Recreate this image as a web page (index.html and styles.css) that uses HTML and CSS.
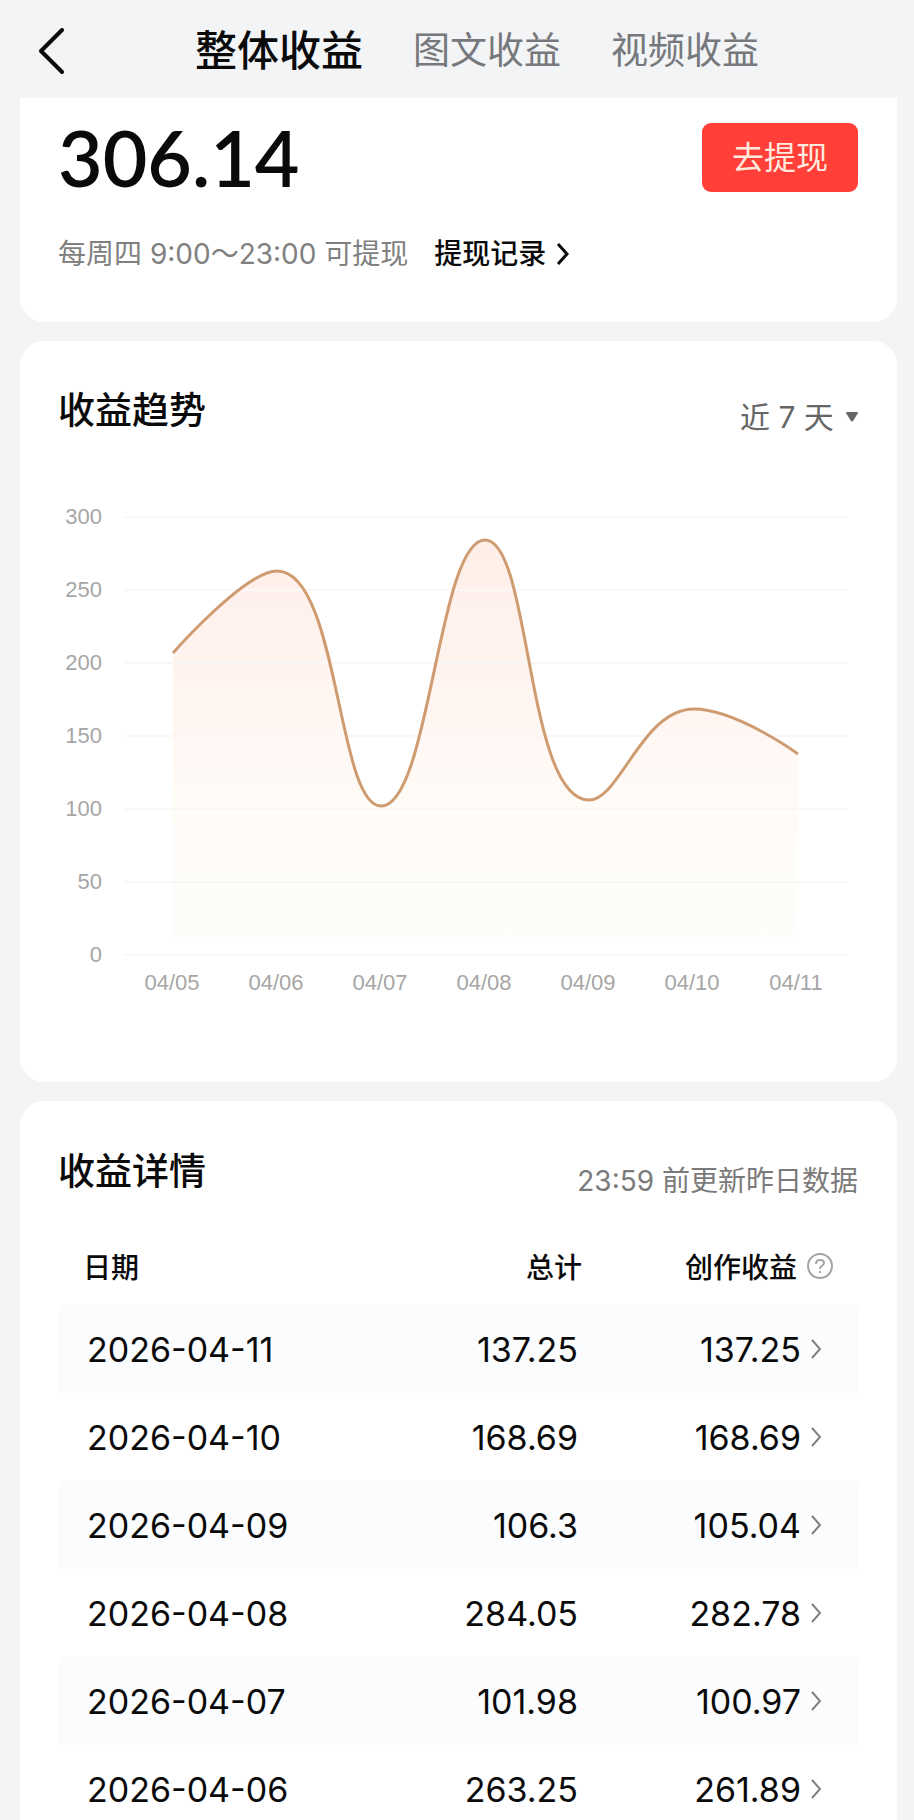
FILE: index.html
```html
<!DOCTYPE html>
<html lang="zh-CN">
<head>
    <meta charset="UTF-8">
    <meta name="viewport" content="width=device-width, initial-scale=1.0">
    <title>整体收益</title>
    <link rel="stylesheet" href="styles.css">
</head>
<body>

<header class="top-bar">
    <button class="back-button" aria-label="返回">
        <svg width="26" height="46" viewBox="0 0 26 46" fill="none" stroke="#0a0a0a" stroke-width="4" stroke-linecap="round" stroke-linejoin="round"><path d="M23 2L2 23L23 44"/></svg>
    </button>
    <nav class="tabs">
        <a href="#" class="tab active">整体收益</a>
        <a href="#" class="tab">图文收益</a>
        <a href="#" class="tab">视频收益</a>
    </nav>
</header>

<main class="container">
    <!-- Balance -->
    <section class="card balance-card">
        <div class="balance-row">
            <div class="balance">306.14</div>
            <button class="withdraw-button">去提现</button>
        </div>
        <div class="balance-note">
            <span>每周四 9:00～23:00 可提现</span>
            <a href="#" class="record-link">提现记录
                <svg width="14" height="24" viewBox="0 0 14 24" fill="none" stroke="#0a0a0a" stroke-width="3"><path d="M2 2L11 12L2 22"/></svg>
            </a>
        </div>
    </section>

    <!-- Trend chart -->
    <section class="card trend-card">
        <div class="card-header">
            <h2>收益趋势</h2>
            <div class="range">
                <select class="range-select" aria-label="时间范围">
                    <option>近 7 天</option>
                </select>
                <svg width="12" height="10" viewBox="0 0 12 10" fill="#666"><path d="M1 0H11Q12 0 12 1L7 9Q6 10 5 9L0 1Q0 0 1 0Z"/></svg>
            </div>
        </div>
        <svg class="chart" viewBox="-1 0 800 500" role="img" aria-label="收益趋势">
            <defs>
                <linearGradient id="area" x1="0" y1="39" x2="0" y2="436" gradientUnits="userSpaceOnUse">
                    <stop offset="0" stop-color="#ffeee8"/>
                    <stop offset="0.4" stop-color="#fff5f1"/>
                    <stop offset="0.7" stop-color="#fffcf8"/>
                    <stop offset="1" stop-color="#fefdfb"/>
                </linearGradient>
            </defs>
            <path fill="url(#area)" d="M114 152C114 152 186 70 218 70C280 70 278 305 322 305C371 305 379 39 426 39C472 39 467 299 530 299C561 299 583 208 635 208C677 208 739 253 739 253V436H114Z"/>
            <g class="grid">
                <path d="M65 16H789M65 89H789M65 162H789M65 235H789M65 308H789M65 381H789M65 454H789"/>
            </g>
            <path class="line" d="M114 152C114 152 186 70 218 70C280 70 278 305 322 305C371 305 379 39 426 39C472 39 467 299 530 299C561 299 583 208 635 208C677 208 739 253 739 253"/>
            <g class="axis-y">
                <text x="43" y="23">300</text>
                <text x="43" y="96">250</text>
                <text x="43" y="169">200</text>
                <text x="43" y="242">150</text>
                <text x="43" y="315">100</text>
                <text x="43" y="388">50</text>
                <text x="43" y="461">0</text>
            </g>
            <g class="axis-x">
                <text x="113" y="489">04/05</text>
                <text x="217" y="489">04/06</text>
                <text x="321" y="489">04/07</text>
                <text x="425" y="489">04/08</text>
                <text x="529" y="489">04/09</text>
                <text x="633" y="489">04/10</text>
                <text x="737" y="489">04/11</text>
            </g>
        </svg>
    </section>

    <!-- Daily details -->
    <section class="card detail-card">
        <div class="card-header">
            <h2>收益详情</h2>
            <span class="update-note">23:59 前更新昨日数据</span>
        </div>
        <table class="detail-table">
            <thead>
                <tr>
                    <th class="col-date">日期</th>
                    <th class="col-total">总计</th>
                    <th class="col-income">
                        <div class="income-head">创作收益
                            <svg width="26" height="26" viewBox="0 0 26 26" fill="none" stroke="#a3a3a3" stroke-width="2"><circle cx="13" cy="13" r="12"/><path d="M9 11C9 8 11 7 13 7C15 7 17 8 17 10C17 13 13 12 13 16M13 18V20"/></svg>
                        </div>
                    </th>
                </tr>
            </thead>
            <tbody>
                <tr>
                    <td>2026-04-11</td>
                    <td>137.25</td>
                    <td><a href="#" class="income">137.25<svg class="arrow" width="12" height="20" viewBox="0 0 12 20"><path d="M2 1L10 10L2 19"/></svg></a></td>
                </tr>
                <tr>
                    <td>2026-04-10</td>
                    <td>168.69</td>
                    <td><a href="#" class="income">168.69<svg class="arrow" width="12" height="20" viewBox="0 0 12 20"><path d="M2 1L10 10L2 19"/></svg></a></td>
                </tr>
                <tr>
                    <td>2026-04-09</td>
                    <td>106.3</td>
                    <td><a href="#" class="income">105.04<svg class="arrow" width="12" height="20" viewBox="0 0 12 20"><path d="M2 1L10 10L2 19"/></svg></a></td>
                </tr>
                <tr>
                    <td>2026-04-08</td>
                    <td>284.05</td>
                    <td><a href="#" class="income">282.78<svg class="arrow" width="12" height="20" viewBox="0 0 12 20"><path d="M2 1L10 10L2 19"/></svg></a></td>
                </tr>
                <tr>
                    <td>2026-04-07</td>
                    <td>101.98</td>
                    <td><a href="#" class="income">100.97<svg class="arrow" width="12" height="20" viewBox="0 0 12 20"><path d="M2 1L10 10L2 19"/></svg></a></td>
                </tr>
                <tr>
                    <td>2026-04-06</td>
                    <td>263.25</td>
                    <td><a href="#" class="income">261.89<svg class="arrow" width="12" height="20" viewBox="0 0 12 20"><path d="M2 1L10 10L2 19"/></svg></a></td>
                </tr>
            </tbody>
        </table>
    </section>
</main>

</body>
</html>
```
FILE: styles.css
```css
* {
    box-sizing: border-box;
}
body {
    font-family: Inter, "Noto Sans CJK SC", sans-serif;
    margin: 0;
    background-color: #f2f4f6;
    color: #0a0a0a;
}
a {
    color: inherit;
    text-decoration: none;
}
button {
    font-family: inherit;
    border: none;
    cursor: pointer;
}
.top-bar {
    display: flex;
    align-items: center;
    height: 98px;
    padding: 4px 40px 0 39px;
}
.back-button {
    display: flex;
    padding: 0;
    background: none;
}
.tabs {
    display: flex;
    flex: 1;
    align-items: center;
    gap: 50px;
    margin-left: 130px;
    line-height: 60px;
}
.tab {
    font-size: 37px;
    color: #76787b;
    white-space: nowrap;
}
.tab.active {
    font-size: 42px;
    font-weight: 500;
    color: #0a0a0a;
}
.container {
    display: flex;
    flex-direction: column;
    gap: 19px;
    padding: 0 17px 0 20px;
}
.card {
    background-color: #fff;
    border-radius: 24px;
    padding: 0 39px 0 38px;
}
.balance-card {
    border-radius: 0 0 24px 24px;
    padding-top: 20px;
    padding-bottom: 48px;
}
.balance-row {
    display: flex;
    justify-content: space-between;
    align-items: center;
}
.balance {
    font-family: Lato, sans-serif;
    font-size: 77px;
    font-weight: 600;
    line-height: 78px;
}
.withdraw-button {
    padding: 0 30px;
    border-radius: 9px;
    background-color: #ff3f38;
    color: #ffe9df;
    font-size: 32px;
    line-height: 69px;
}
.balance-note {
    display: flex;
    align-items: center;
    gap: 26px;
    margin-top: 38px;
    font-size: 28px;
    line-height: 40px;
    color: #808080;
}
.record-link {
    display: flex;
    align-items: center;
    gap: 10px;
    color: #0a0a0a;
    font-weight: 500;
}
.card-header {
    display: flex;
    justify-content: space-between;
    align-items: center;
}
h2 {
    margin: 0;
    font-size: 37px;
    font-weight: 500;
    line-height: 56px;
}
.trend-card {
    padding-top: 42px;
    padding-bottom: 81px;
}
.range {
    display: flex;
    align-items: center;
    gap: 12px;
    padding-top: 12px;
}
.range-select {
    appearance: none;
    border: none;
    background: none;
    padding: 0;
    font-family: inherit;
    font-size: 30px;
    line-height: 40px;
    color: #666;
}
.chart {
    display: block;
    width: 100%;
    margin-top: 62px;
    font-family: "Liberation Sans", Arial, sans-serif;
    font-size: 22px;
}
.grid path {
    stroke: #faf8f7;
    stroke-width: 2;
}
.line {
    fill: none;
    stroke: #cf9b70;
    stroke-width: 3;
}
.axis-y text {
    fill: #a6a6a6;
    text-anchor: end;
}
.axis-x text {
    fill: #a6a6a6;
    text-anchor: middle;
}
.detail-card {
    padding-top: 42px;
    border-radius: 24px 24px 0 0;
}
.update-note {
    padding-top: 18px;
    font-size: 28px;
    line-height: 40px;
    color: #7a7a7a;
}
.detail-table {
    width: 100%;
    margin-top: 26px;
    border-collapse: collapse;
    table-layout: fixed;
}
.detail-table th {
    height: 78px;
    padding: 0;
    font-size: 28px;
    font-weight: 500;
    text-align: right;
}
.detail-table .col-date {
    width: 35%;
    padding-left: 25px;
    text-align: left;
}
.detail-table .col-income {
    width: 276px;
}
.income-head {
    display: flex;
    justify-content: flex-end;
    align-items: center;
    gap: 10px;
    padding-right: 25px;
}
.detail-table td {
    height: 88px;
    padding: 0 4px 0 0;
    font-size: 34px;
    text-align: right;
}
.detail-table td:first-child {
    padding-left: 29px;
    text-align: left;
}
.detail-table td:last-child {
    padding-right: 36px;
}
.detail-table tbody tr:nth-child(odd) {
    background-color: #fafcfe;
}
.income {
    display: flex;
    justify-content: flex-end;
    align-items: center;
    gap: 9px;
}
.arrow path {
    fill: none;
    stroke: #808080;
    stroke-width: 2;
}
```
